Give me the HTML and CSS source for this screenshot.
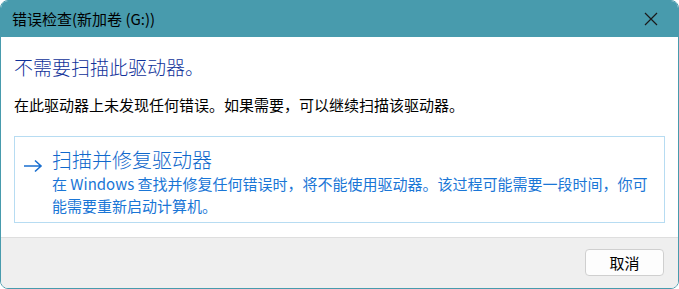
FILE: index.html
```html
<!DOCTYPE html>
<html lang="zh-CN">
<head>
<meta charset="utf-8">
<title>错误检查</title>
<link rel="stylesheet" href="styles.css">
</head>
<body>
<div class="window">
  <div class="titlebar">
    <span class="title">错误检查(新加卷 (G:))</span>
    <span class="close">
      <svg width="14" height="14" viewBox="0 0 14 14"><path d="M1 1 L13 13 M13 1 L1 13" stroke="#1a1a1a" stroke-width="1.2" fill="none"/></svg>
    </span>
  </div>
  <div class="content">
    <div class="instruction">不需要扫描此驱动器。</div>
    <div class="message">在此驱动器上未发现任何错误。如果需要，可以继续扫描该驱动器。</div>
    <div class="command">
      <span class="arrow">
        <svg width="20" height="14" viewBox="0 0 20 14"><path d="M1 7 H18 M12 1.5 L18 7 L12 12.5" stroke="#1a6fcf" stroke-width="1.6" fill="none"/></svg>
      </span>
      <div class="command-text">
        <div class="command-title">扫描并修复驱动器</div>
        <div class="command-desc">在 Windows 查找并修复任何错误时，将不能使用驱动器。该过程可能需要一段时间，你可能需要重新启动计算机。</div>
      </div>
    </div>
  </div>
  <div class="footer">
    <button class="btn">取消</button>
  </div>
</div>
</body>
</html>
```
FILE: styles.css
```css
html, body {
  margin: 0;
  padding: 0;
  background: #ffffff;
}
body {
  font-family: "Noto Sans CJK SC", "Noto Sans", sans-serif;
  font-weight: 400;
}
.window {
  box-sizing: border-box;
  width: 679px;
  height: 289px;
  border: 1px solid #489bad;
  border-radius: 8px;
  overflow: hidden;
  display: flex;
  flex-direction: column;
  background: #fff;
}
.titlebar {
  height: 36px;
  flex: none;
  background: #489bad;
  display: flex;
  align-items: center;
  justify-content: space-between;
  padding: 0 20px 0 11px;
}
.title {
  font-size: 15px;
  color: #000;
  line-height: 20px;
}
.close {
  display: flex;
  align-items: center;
}
.content {
  flex: 1;
  padding: 17px 13px 0 13px;
}
.instruction {
  font-size: 19px;
  line-height: 26px;
  font-weight: 300;
  color: #10329a;
}
.message {
  margin-top: 14px;
  font-size: 15px;
  line-height: 22px;
  color: #000;
}
.command {
  margin-top: 20px;
  border: 1px solid #b7dcf2;
  height: 87px;
  box-sizing: border-box;
  display: flex;
  align-items: flex-start;
  padding: 10px 10px 0 8px;
}
.arrow {
  width: 29px;
  flex: none;
  padding-top: 7px;
}
.command-text {
  flex: 1;
  color: #1570d0;
}
.command-title {
  font-size: 20px;
  line-height: 26px;
  font-weight: 300;
  color: #0f68cc;
}
.command-desc {
  font-size: 15px;
  line-height: 22px;
  color: #1a76d6;
}
.footer {
  height: 50px;
  flex: none;
  border-top: 1px solid #dedede;
  background: #efefef;
  display: flex;
  align-items: center;
  justify-content: flex-end;
  padding-right: 14px;
}
.btn {
  width: 79px;
  height: 27px;
  border: 1px solid #cfcfcf;
  border-radius: 4px;
  background: #fdfdfd;
  font-family: "Noto Sans CJK SC", sans-serif;
  font-size: 15px;
  color: #000;
  padding: 0;
  margin-bottom: 1px;
}
```
